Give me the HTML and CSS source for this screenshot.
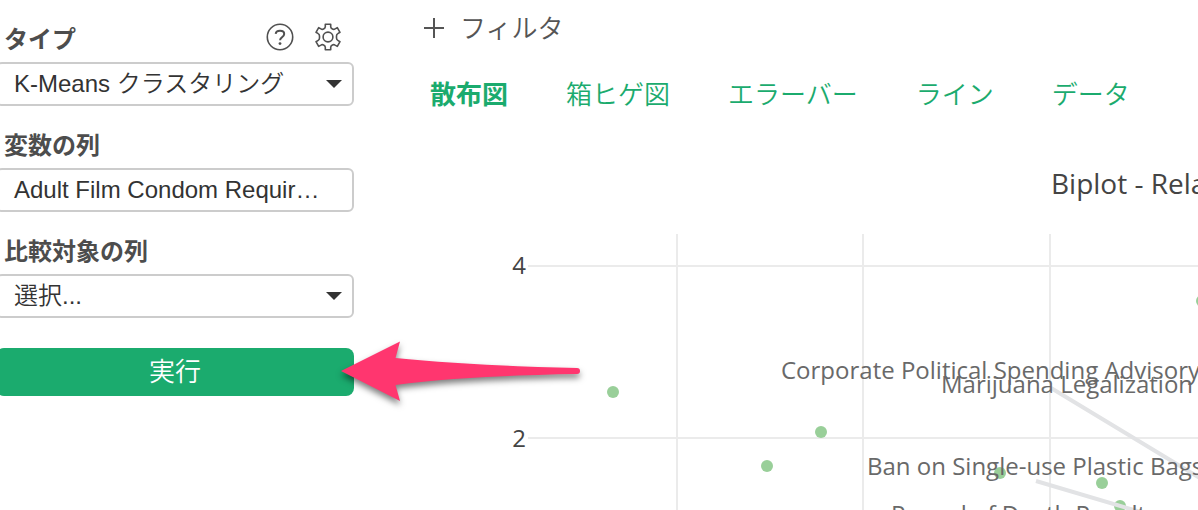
FILE: index.html
```html
<!DOCTYPE html>
<html lang="ja">
<head>
    <meta charset="UTF-8">
    <meta name="viewport" content="width=device-width, initial-scale=1.0">
    <title>K-Means クラスタリング</title>
    <link rel="stylesheet" href="styles.css">
</head>
<body>
    <div class="container">
        <form class="sidebar">
            <div class="form-group">
                <div class="form-header">
                    <label for="type">タイプ</label>
                    <div class="tools">
                        <button type="button" class="icon-btn" aria-label="ヘルプ">
                            <svg width="28" height="28" viewBox="0 0 28 28" fill="none" stroke="#505050" stroke-width="1.6">
                                <circle cx="14" cy="14" r="12.7"/>
                                <path d="M9.7 10.8C9.9 8.8 11.6 7.8 14 7.8c2.5 0 4.2 1.2 4.2 3.2 0 1.7-1 2.5-2.3 3.3-1.3.8-1.8 1.4-1.8 3" stroke-width="2"/>
                                <circle cx="14" cy="20.6" r="1.4" fill="#505050" stroke="none"/>
                            </svg>
                        </button>
                        <button type="button" class="icon-btn" aria-label="設定">
                            <svg width="28" height="28" viewBox="0 0 28 28" fill="none" stroke="#505050" stroke-width="1.6" stroke-linejoin="round">
                                <path d="M11.3 1.2h5.4v2.6c0 1 .7 1.7 1.7 2.2s1.9.4 2.7-.1l2.2-1.3 2.7 4.7-2.2 1.3c-.9.5-1.3 1.4-1.3 2.4v2c0 1 .4 1.9 1.3 2.4l2.2 1.3-2.7 4.7-2.2-1.3c-.8-.5-1.7-.6-2.7-.1s-1.7 1.2-1.7 2.2v2.6h-5.4v-2.6c0-1-.7-1.7-1.7-2.2s-1.9-.4-2.7.1l-2.2 1.3L2 18.7l2.2-1.3c.9-.5 1.3-1.4 1.3-2.4v-2c0-1-.4-1.9-1.3-2.4L2 9.3l2.7-4.7 2.2 1.3c.8.5 1.7.6 2.7.1s1.7-1.200 1.7-2.200z"/>
                                <circle cx="14" cy="14" r="4.9"/>
                            </svg>
                        </button>
                    </div>
                </div>
                <div class="select">
                    <select id="type" class="field">
                        <option>K-Means クラスタリング</option>
                    </select>
                </div>
            </div>
            <div class="form-group">
                <div class="form-header">
                    <label for="columns">変数の列</label>
                </div>
                <button type="button" id="columns" class="field">Adult Film Condom Requir…</button>
            </div>
            <div class="form-group">
                <div class="form-header">
                    <label for="target">比較対象の列</label>
                </div>
                <div class="select">
                    <select id="target" class="field">
                        <option>選択...</option>
                    </select>
                </div>
            </div>
            <div class="run">
                <button type="button" class="btn">実行</button>
                <svg class="arrow" width="250" height="80" viewBox="0 0 250 80">
                    <path d="M6 33L65 3.5L60.5 20C110 25 180 29 242 30Q245 30 245 33T242 36C180 37 110 40 60.5 47L65 63Z" fill="#ff366f"/>
                </svg>
            </div>
        </form>

        <div class="main">
            <button type="button" class="filter">
                <svg width="20" height="20" viewBox="0 0 20 20" stroke="#555" stroke-width="2">
                    <path d="M0 10h20M10 0v20"/>
                </svg>
                <span>フィルタ</span>
            </button>
            <nav class="tabs">
                <a href="#scatter" class="active">散布図</a>
                <a href="#box">箱ヒゲ図</a>
                <a href="#error">エラーバー</a>
                <a href="#line">ライン</a>
                <a href="#data">データ</a>
            </nav>
            <svg class="chart">
                <text class="title" x="697" y="62">Biplot - Rela</text>
                <!-- grid -->
                <path class="grid" d="M174 134H2000M174 306H2000M323 102V2000M509 102V2000M696 102V2000"/>
                <text class="tick" x="172" y="142">4</text>
                <text class="tick" x="172" y="315">2</text>
                <!-- observations -->
                <g class="points">
                    <circle cx="259" cy="260" r="6"/>
                    <circle cx="467" cy="300" r="6"/>
                    <circle cx="413" cy="334" r="6"/>
                    <circle cx="646" cy="341" r="6"/>
                    <circle cx="748" cy="351" r="6"/>
                    <circle cx="766" cy="374" r="6"/>
                    <circle cx="848" cy="169" r="6"/>
                </g>
                <!-- loadings -->
                <path class="vector" d="M697 256L846 346M682 349L790 381"/>
                <g class="names">
                    <text x="427" y="247">Corporate Political Spending Advisory</text>
                    <text x="587" y="261">Marijuana Legalization</text>
                    <text x="513" y="343">Ban on Single-use Plastic Bags</text>
                    <text x="537" y="391">Repeal of Death Penalty</text>
                </g>
            </svg>
        </div>
    </div>
</body>
</html>
```
FILE: styles.css
```css
body {
    font-family: "Liberation Sans", "Noto Sans CJK JP", sans-serif;
    background-color: white;
    color: #333;
    margin: 0;
    overflow: hidden;
}
button,
select {
    font: inherit;
    color: inherit;
}
.container {
    display: flex;
    height: 100vh;
}
.sidebar {
    flex: 0 0 358px;
    margin-left: -4px;
}
.form-header {
    display: flex;
    justify-content: space-between;
    align-items: flex-end;
    box-sizing: border-box;
    height: 62px;
    padding: 0 12px 6px 8px;
}
.form-header label {
    font-size: 24px;
    font-weight: bold;
    line-height: 32px;
    color: #4d4d4d;
}
.tools {
    display: flex;
    gap: 20px;
    padding-bottom: 5px;
}
.icon-btn {
    display: flex;
    padding: 0;
    border: none;
    background: none;
    cursor: pointer;
}
.select {
    position: relative;
}
.select::after {
    content: "";
    position: absolute;
    top: 18px;
    right: 12px;
    border: 8px solid transparent;
    border-top-color: #333;
    border-bottom: none;
    pointer-events: none;
}
.field {
    display: block;
    box-sizing: border-box;
    width: 100%;
    height: 44px;
    padding: 0 16px;
    border: 2px solid #ccc;
    border-radius: 6px;
    background-color: white;
    font-size: 24px;
    font-weight: 350;
    text-align: left;
    appearance: none;
}
select.field {
    padding-bottom: 2px;
}
.run {
    position: relative;
    margin-top: 30px;
}
.btn {
    display: block;
    width: 100%;
    height: 48px;
    padding: 0;
    border: none;
    border-radius: 8px;
    background-color: #1bab6e;
    color: white;
    font-size: 26px;
    font-weight: 350;
    line-height: 42px;
    cursor: pointer;
}
.arrow {
    position: absolute;
    top: -10px;
    left: 339px;
    filter: drop-shadow(0 4px 3px rgba(0, 0, 0, 0.5));
    pointer-events: none;
}
.main {
    flex: 1;
    min-width: 0;
    display: flex;
    flex-direction: column;
}
.filter {
    display: flex;
    align-items: center;
    gap: 16px;
    height: 56px;
    padding: 0 70px;
    border: none;
    background: none;
    color: #555;
    font-size: 26px;
    font-weight: 350;
    cursor: pointer;
}
.filter span {
    padding-bottom: 4px;
}
.tabs {
    display: flex;
    align-items: center;
    gap: 58px;
    box-sizing: border-box;
    height: 76px;
    padding: 0 0 4px 76px;
}
.tabs a {
    color: #1bab6e;
    font-size: 26px;
    font-weight: 350;
    text-decoration: none;
    white-space: nowrap;
}
.tabs .active {
    font-weight: bold;
}
.chart {
    flex: 1;
    width: 100%;
    min-height: 0;
    font-family: "Open Sans", sans-serif;
    font-size: 24px;
}
.title {
    font-size: 28px;
    fill: #444;
}
.tick {
    fill: #444;
    text-anchor: end;
}
.grid {
    fill: none;
    stroke: #ebebeb;
    stroke-width: 2;
}
.points {
    fill: #99cf99;
}
.vector {
    fill: none;
    stroke: #e2e3e5;
    stroke-width: 4;
}
.names {
    fill: #696969;
}
```
